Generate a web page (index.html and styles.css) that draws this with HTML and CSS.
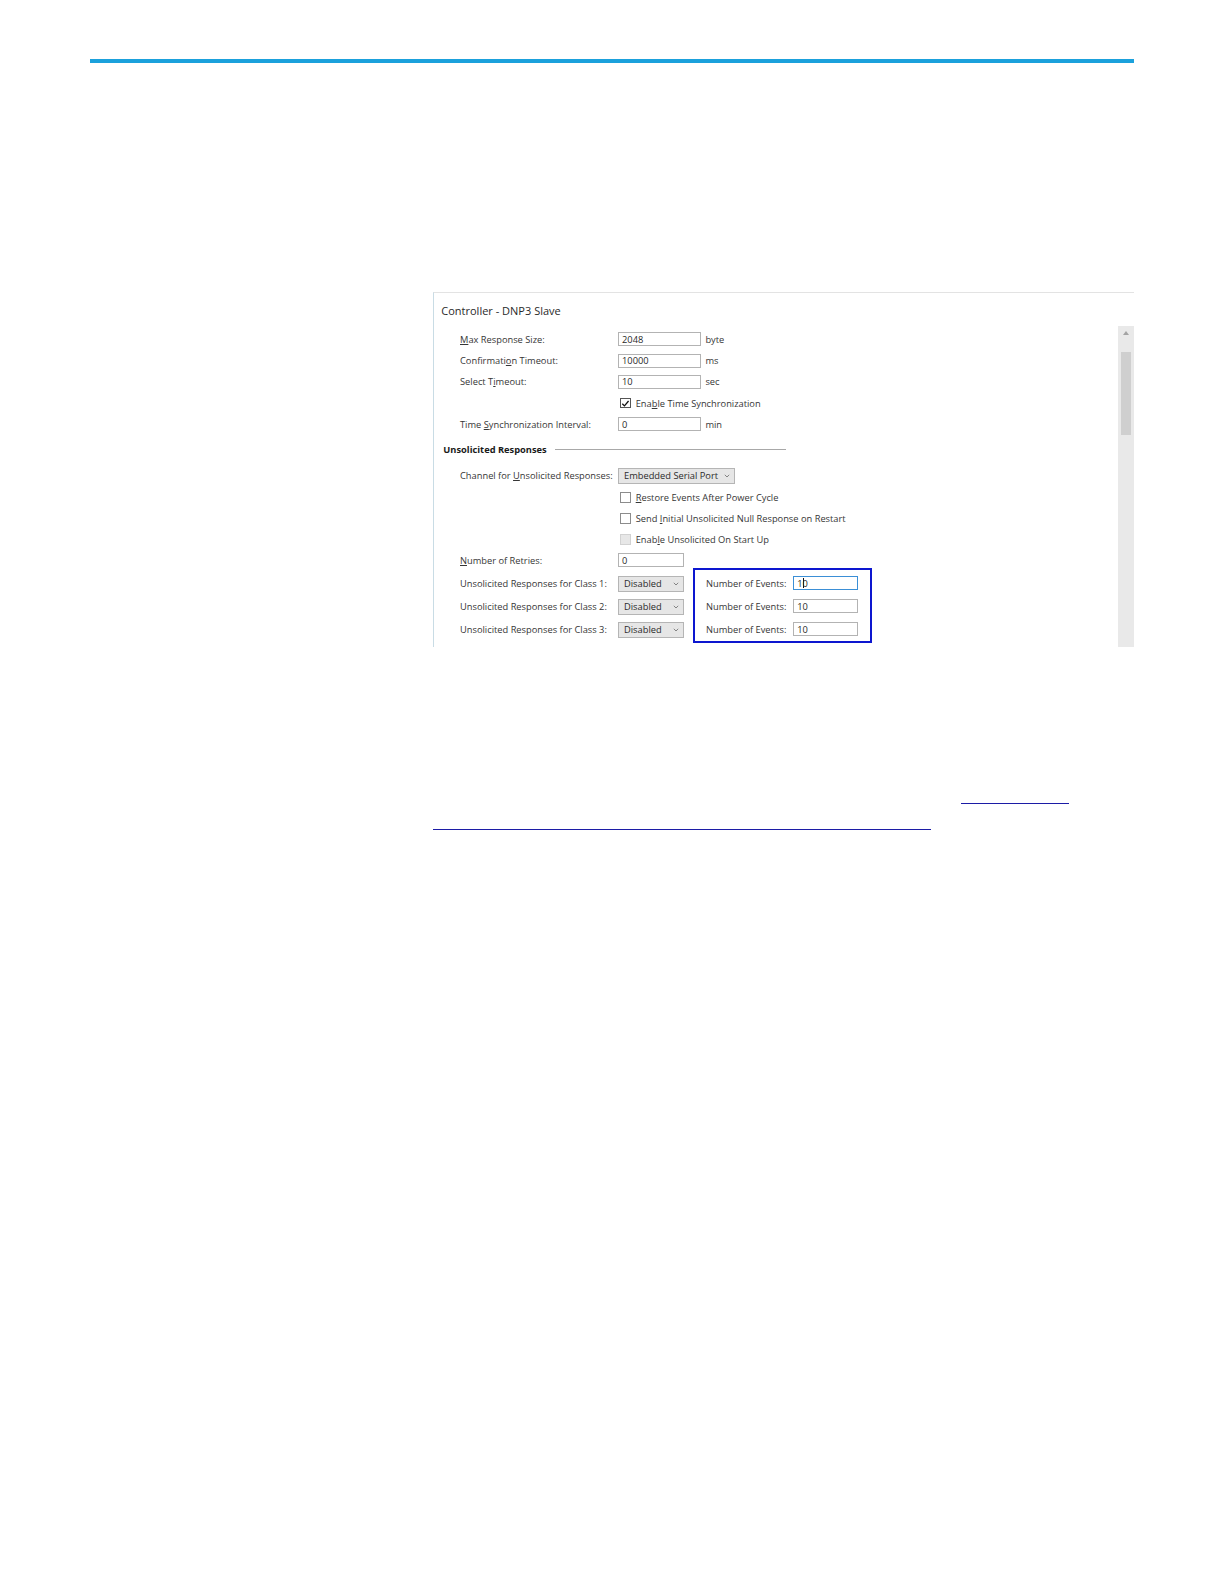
FILE: index.html
```html
<!DOCTYPE html>
<html lang="en">
<head>
<meta charset="utf-8">
<title>Controller - DNP3 Slave</title>
<link rel="stylesheet" href="styles.css">
</head>
<body>
<div class="page">
  <div class="rule"></div>

  <div class="shot">
    <div class="form">
      <div class="title">Controller - DNP3 Slave</div>

      <div class="row">
        <span class="lbl"><u>M</u>ax Response Size:</span>
        <span class="inp">2048</span>
        <span class="unit">byte</span>
      </div>
      <div class="row">
        <span class="lbl">Confirmati<u>o</u>n Timeout:</span>
        <span class="inp">10000</span>
        <span class="unit">ms</span>
      </div>
      <div class="row">
        <span class="lbl">Select T<u>i</u>meout:</span>
        <span class="inp">10</span>
        <span class="unit">sec</span>
      </div>
      <div class="row">
        <span class="lbl"></span>
        <span class="cb cb-checked"><svg viewBox="0 0 10 10" width="9" height="9"><path d="M1.5 5.2 L4 7.7 L8.7 2.1" fill="none" stroke="#111" stroke-width="1.5"/></svg></span>
        <span class="cbtext">Ena<u>b</u>le Time Synchronization</span>
      </div>
      <div class="row">
        <span class="lbl">Time <u>S</u>ynchronization Interval:</span>
        <span class="inp">0</span>
        <span class="unit">min</span>
      </div>

      <div class="section">
        <span class="section-name">Unsolicited Responses</span>
        <span class="section-line"></span>
      </div>

      <div class="row row-ch">
        <span class="lbl">Channel for <u>U</u>nsolicited Responses:</span>
        <span class="dd dd-wide">Embedded Serial Port<svg class="chev" viewBox="0 0 6 4" width="6" height="4"><path d="M0.8 0.8 L3 3 L5.2 0.8" fill="none" stroke="#777" stroke-width="0.9"/></svg></span>
      </div>
      <div class="row row-cb">
        <span class="lbl"></span>
        <span class="cb"></span>
        <span class="cbtext"><u>R</u>estore Events After Power Cycle</span>
      </div>
      <div class="row row-cb">
        <span class="lbl"></span>
        <span class="cb"></span>
        <span class="cbtext">Send <u>I</u>nitial Unsolicited Null Response on Restart</span>
      </div>
      <div class="row row-cb">
        <span class="lbl"></span>
        <span class="cb cb-disabled"></span>
        <span class="cbtext">Enab<u>l</u>e Unsolicited On Start Up</span>
      </div>
      <div class="row row-cb">
        <span class="lbl"><u>N</u>umber of Retries:</span>
        <span class="inp inp-short">0</span>
      </div>

      <div class="classes">
        <div class="class-col">
          <div class="row row-cl">
            <span class="lbl">Unsolicited Responses for Class 1:</span>
            <span class="dd dd-small">Disabled<svg class="chev" viewBox="0 0 6 4" width="6" height="4"><path d="M0.8 0.8 L3 3 L5.2 0.8" fill="none" stroke="#777" stroke-width="0.9"/></svg></span>
          </div>
          <div class="row row-cl">
            <span class="lbl">Unsolicited Responses for Class 2:</span>
            <span class="dd dd-small">Disabled<svg class="chev" viewBox="0 0 6 4" width="6" height="4"><path d="M0.8 0.8 L3 3 L5.2 0.8" fill="none" stroke="#777" stroke-width="0.9"/></svg></span>
          </div>
          <div class="row row-cl">
            <span class="lbl">Unsolicited Responses for Class 3:</span>
            <span class="dd dd-small">Disabled<svg class="chev" viewBox="0 0 6 4" width="6" height="4"><path d="M0.8 0.8 L3 3 L5.2 0.8" fill="none" stroke="#777" stroke-width="0.9"/></svg></span>
          </div>
        </div>
        <div class="events">
          <div class="ev-row">
            <span class="ev-lbl">Number of Events:</span>
            <span class="inp inp-ev inp-focus">1<i class="caret"></i>0</span>
          </div>
          <div class="ev-row">
            <span class="ev-lbl">Number of Events:</span>
            <span class="inp inp-ev">10</span>
          </div>
          <div class="ev-row">
            <span class="ev-lbl">Number of Events:</span>
            <span class="inp inp-ev">10</span>
          </div>
        </div>
      </div>
    </div>

    <div class="scroll">
      <div class="arrow"></div>
      <div class="thumb"></div>
    </div>
  </div>

  <div class="links">
    <span class="link-line link-line-1"></span>
    <span class="link-line link-line-2"></span>
  </div>
</div>
</body>
</html>
```

FILE: styles.css
```css
html, body {
  margin: 0;
  padding: 0;
  background: #ffffff;
}

body {
  font-family: "Open Sans", "Noto Sans", "Liberation Sans", sans-serif;
  color: #333333;
}

.page {
  padding-top: 59px;
  width: 1224px;
  height: 1525px;
}

.rule {
  margin-left: 90px;
  width: 1044px;
  height: 4px;
  background: #1ba1dc;
}

/* screenshot panel */
.shot {
  box-sizing: border-box;
  margin-top: 229px;
  margin-left: 433px;
  width: 701px;
  height: 355px;
  border-top: 1px solid #e3e3e3;
  border-left: 1px solid #c9dce5;
  display: flex;
  background: #ffffff;
}

.form {
  flex: 1;
  font-size: 9.3px;
  color: #363636;
}

.title {
  padding: 10.7px 0 0 7.3px;
  height: 14px;
  line-height: 14px;
  margin-bottom: 11px;
  font-size: 11px;
  color: #2a2a2a;
}

.row {
  display: flex;
  align-items: center;
  height: 21.25px;
  margin-left: 26px;
  white-space: nowrap;
}

.row u {
  text-decoration: underline;
  text-underline-offset: 1px;
  text-decoration-thickness: 1px;
}

.lbl {
  width: 158px;
  flex: none;
}

.inp {
  box-sizing: border-box;
  flex: none;
  width: 82.7px;
  height: 14px;
  border: 1px solid #b3b3b3;
  padding-left: 3px;
  display: flex;
  align-items: center;
  background: #fff;
  color: #2a2a2a;
}

.inp-short {
  width: 66px;
}

.unit {
  margin-left: 4.7px;
}

.cb {
  box-sizing: border-box;
  flex: none;
  width: 10.7px;
  height: 10.7px;
  margin-left: 2px;
  border: 1px solid #8c8c8c;
  background: #fff;
  display: flex;
  align-items: center;
  justify-content: center;
}

.cb-checked {
  border-color: #555;
}

.cb-disabled {
  border-color: #d2d2d2;
  background: #e7e7e7;
}

.cbtext {
  margin-left: 5px;
}

.section {
  display: flex;
  align-items: center;
  height: 20px;
  margin: 5.05px 0 0 9.3px;
  font-weight: 700;
  font-size: 9.3px;
  color: #1a1a1a;
}

.section-line {
  width: 231px;
  height: 1px;
  background: #a8a8a8;
  margin-left: 8.5px;
}

.row-ch {
  margin-top: 5px;
  height: 22px;
}

.row-cb {
  height: 21px;
}

.dd {
  box-sizing: border-box;
  flex: none;
  height: 16px;
  border: 1px solid #b5b5b5;
  background: #e6e6e6;
  padding: 0 4px 0 5px;
  display: flex;
  align-items: center;
  color: #2a2a2a;
}

.dd-wide {
  width: 117px;
}

.dd-small {
  width: 66px;
}

.chev {
  margin-left: auto;
  flex: none;
}

.classes {
  display: flex;
  align-items: flex-start;
}

.class-col {
  padding-top: 1.5px;
}

.row-cl {
  height: 23px;
}

.events {
  margin-top: -3.3px;
  margin-left: 9.3px;
  border: 2px solid #0d17cf;
  padding: 2px 11.4px 0 10.7px;
}

.ev-row {
  display: flex;
  align-items: center;
  height: 23px;
  white-space: nowrap;
}

.ev-lbl {
  width: 87.3px;
  flex: none;
}

.inp-ev {
  width: 65px;
  height: 14.5px;
}

.inp-focus {
  border-color: #3b8fd6;
}

.caret {
  display: inline-block;
  width: 1px;
  height: 10px;
  background: #111;
  margin: 0 -1px 0 0;
}

/* scrollbar */
.scroll {
  flex: none;
  width: 16px;
  margin-top: 33px;
  background: #e9e9e9;
  display: flex;
  flex-direction: column;
  align-items: center;
}

.arrow {
  width: 0;
  height: 0;
  margin-top: 5px;
  border-left: 3.5px solid transparent;
  border-right: 3.5px solid transparent;
  border-bottom: 4px solid #a3a3a3;
}

.thumb {
  margin-top: 16.7px;
  width: 10px;
  height: 83.3px;
  background: #cfcfcf;
}

/* link underlines */
.links {
  display: flex;
  flex-direction: column;
}

.link-line {
  display: block;
  height: 1px;
  background: #1c1ca6;
}

.link-line-1 {
  margin-top: 156px;
  margin-left: 961px;
  width: 108px;
}

.link-line-2 {
  margin-top: 25px;
  margin-left: 433px;
  width: 498px;
}
```
